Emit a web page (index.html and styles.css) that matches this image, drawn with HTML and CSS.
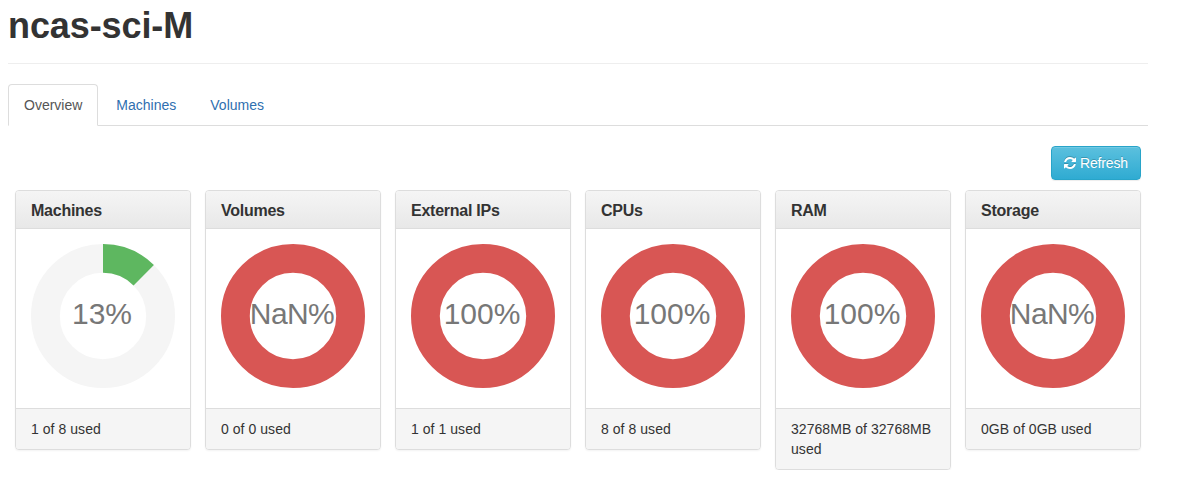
FILE: index.html
```html
<!DOCTYPE html>
<html lang="en">
<head>
<meta charset="utf-8">
<title>ncas-sci-M</title>
<link rel="stylesheet" href="styles.css">
</head>
<body>
<main class="container">
  <header class="page-header"><h1>ncas-sci-M</h1></header>
  <ul class="tabs">
    <li><a class="tab active">Overview</a></li>
    <li><a class="tab">Machines</a></li>
    <li><a class="tab">Volumes</a></li>
  </ul>
  <div class="toolbar">
    <button class="btn"><svg class="icon" viewBox="0 0 1536 1536"><path d="M1511 928q0 5-1 7-64 268-268 434.500T764 1536q-146 0-282.500-55T238 1324l-129 129q-19 19-45 19t-45-19-19-45V960q0-26 19-45t45-19h448q26 0 45 19t19 45-19 45l-137 137q71 66 161 102t187 36q134 0 250-65t186-179q11-17 53-117 8-23 30-23h192q13 0 22.500 9.500t9.500 22.500zm25-800v448q0 26-19 45t-45 19h-448q-26 0-45-19t-19-45 19-45l138-138Q969 256 768 256q-134 0-250 65T332 500q-11 17-53 117-8 23-30 23H50q-13 0-22.500-9.500T18 608v-7q65-268 270-434.500T768 0q146 0 284 55.500T1297 212l130-129q19-19 45-19t45 19 19 45z"/></svg><span>Refresh</span></button>
  </div>
  <section class="cards">
    <article class="card">
      <h3 class="card-title">Machines</h3>
      <div class="card-body"><svg class="donut" viewBox="0 0 144 144"><circle class="track" cx="72" cy="72" r="57.6"/><path class="ok" d="M72 0A72 72 0 0 1 122.900 21.100L102.550 41.450A43.200 43.200 0 0 0 72 28.800Z"/><text x="71" y="80">13%</text></svg></div>
      <footer class="card-footer">1 of 8 used</footer>
    </article>
    <article class="card">
      <h3 class="card-title">Volumes</h3>
      <div class="card-body"><svg class="donut" viewBox="0 0 144 144"><circle class="full" cx="72" cy="72" r="57.6"/><text x="71.300" y="80" textLength="85">NaN%</text></svg></div>
      <footer class="card-footer">0 of 0 used</footer>
    </article>
    <article class="card">
      <h3 class="card-title">External IPs</h3>
      <div class="card-body"><svg class="donut" viewBox="0 0 144 144"><circle class="full" cx="72" cy="72" r="57.6"/><text x="71" y="80">100%</text></svg></div>
      <footer class="card-footer">1 of 1 used</footer>
    </article>
    <article class="card">
      <h3 class="card-title">CPUs</h3>
      <div class="card-body"><svg class="donut" viewBox="0 0 144 144"><circle class="full" cx="72" cy="72" r="57.6"/><text x="71" y="80">100%</text></svg></div>
      <footer class="card-footer">8 of 8 used</footer>
    </article>
    <article class="card">
      <h3 class="card-title">RAM</h3>
      <div class="card-body"><svg class="donut" viewBox="0 0 144 144"><circle class="full" cx="72" cy="72" r="57.6"/><text x="71" y="80">100%</text></svg></div>
      <footer class="card-footer">32768MB of 32768MB used</footer>
    </article>
    <article class="card">
      <h3 class="card-title">Storage</h3>
      <div class="card-body"><svg class="donut" viewBox="0 0 144 144"><circle class="full" cx="72" cy="72" r="57.6"/><text x="71.300" y="80" textLength="85">NaN%</text></svg></div>
      <footer class="card-footer">0GB of 0GB used</footer>
    </article>
  </section>
</main>
</body>
</html>
```

FILE: styles.css
```css
* { box-sizing: border-box; }
body {
  margin: 0;
  overflow: hidden;
  background: #fff;
  color: #333;
  font: 14px/20px "Liberation Sans", Arial, sans-serif;
}
.container { width: 1140px; margin-left: 8px; }
.page-header { height: 64px; padding-top: 6px; border-bottom: 1px solid #eee; }
h1 { margin: 0; font-size: 36px; line-height: 40px; font-weight: bold; letter-spacing: -0.1px; }
.tabs {
  display: flex;
  gap: 2px;
  height: 42px;
  margin: 20px 0 0;
  padding: 0;
  list-style: none;
  border-bottom: 1px solid #ddd;
}
.tab {
  display: block;
  height: 42px;
  padding: 10px 15px;
  border: 1px solid transparent;
  border-radius: 4px 4px 0 0;
  color: #2f6fb0;
}
.tab.active { color: #555; background: #fff; border-color: #ddd #ddd #fff; }
.toolbar { display: flex; justify-content: flex-end; padding: 20px 7px 10px; }
.btn {
  display: flex;
  align-items: center;
  justify-content: center;
  gap: 4px;
  width: 90px;
  height: 34px;
  padding: 0;
  border: 1px solid #28a4c9;
  border-radius: 4px;
  background: linear-gradient(#5bc0de, #2fabd2);
  box-shadow: inset 0 1px 0 rgba(255,255,255,.15), 0 1px 1px rgba(0,0,0,.075);
  color: #fff;
  font: inherit;
  letter-spacing: -0.15px;
  text-shadow: 0 -1px 0 rgba(0,0,0,.2);
}
.icon { width: 12px; height: 12px; fill: #fff; filter: drop-shadow(0 -1px 0 rgba(0,0,0,.2)); }
.cards {
  display: grid;
  grid-template-columns: repeat(6, 176px);
  gap: 14px;
  align-items: start;
  padding-left: 7px;
}
.card {
  border: 1px solid #ddd;
  border-radius: 4px;
  background: #fff;
  box-shadow: 0 1px 2px rgba(0,0,0,.05);
}
.card-title {
  height: 38px;
  margin: 0;
  padding: 11px 15px 8px;
  border-bottom: 1px solid #ddd;
  border-radius: 3px 3px 0 0;
  background: linear-gradient(#f5f5f5, #e8e8e8);
  font-size: 16px;
  line-height: 18px;
  letter-spacing: -0.25px;
}
.card-body { height: 179px; padding: 15px; }
.donut { display: block; width: 144px; height: 144px; }
.donut circle { fill: none; stroke-width: 28.8; }
.donut .track { stroke: #f5f5f5; }
.donut .full { stroke: #d85654; }
.ok { fill: #5eb760; }
.donut text { fill: #777; font-size: 30px; text-anchor: middle; }
.card-footer {
  padding: 10px 15px;
  border-top: 1px solid #ddd;
  border-radius: 0 0 3px 3px;
  background: #f5f5f5;
  letter-spacing: 0.05px;
}
```
